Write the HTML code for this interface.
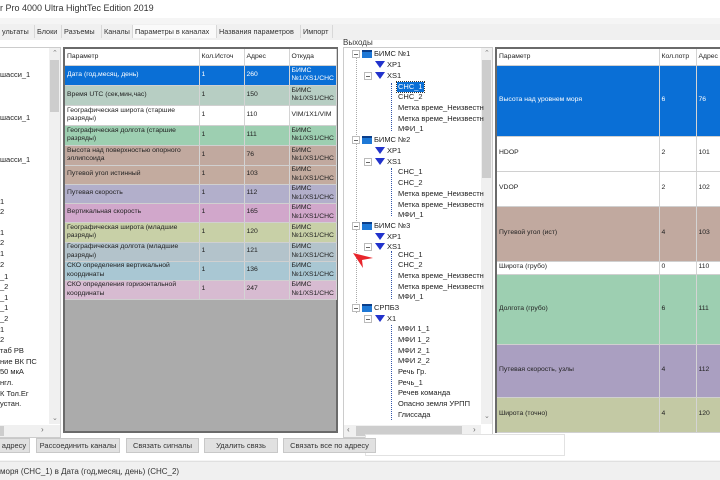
<!DOCTYPE html>
<html><head><meta charset="utf-8"><style>
*{margin:0;padding:0;box-sizing:border-box}
body{width:720px;height:480px;overflow:hidden;background:#f5f5f5;font-family:"Liberation Sans","DejaVu Sans",sans-serif;font-size:7.5px;color:#222;position:relative}
.a{position:absolute;white-space:nowrap}
.tab{position:absolute;top:25px;height:13px;line-height:13px;font-size:7.3px;padding-left:2px;border-right:1px solid #d8d8d8;color:#333;white-space:nowrap;overflow:hidden}
table{border-collapse:collapse;table-layout:fixed;position:absolute}
td{border-right:1px solid #d4d4d4;border-bottom:1px solid #d0d0d0;padding:0 2px;overflow:hidden;white-space:nowrap;font-size:6.8px;vertical-align:middle;line-height:8.5px}
td.w{white-space:normal}
.btn{position:absolute;top:438px;height:15px;background:#e1e1e1;border:1px solid #c8c8c8;font-size:7.5px;line-height:13px;text-align:center;color:#333;white-space:nowrap;overflow:hidden}
.t{position:absolute;font-size:7.5px;white-space:nowrap;line-height:10px}
.bx{position:absolute;width:8px;height:8px;border:1px solid #bbb;background:#fff}
.bx:after{content:"";position:absolute;left:1px;top:3px;width:4px;height:1px;background:#666}
.pc{position:absolute;width:10px;height:8px;background:#1e78d6;border-top:2px solid #0a3e8a}
.cn{position:absolute;width:0;height:0;border-left:5px solid transparent;border-right:5px solid transparent;border-top:7px solid #2233cc}
.wv{position:absolute;width:4px;height:9px;border-left:1px dotted #3355aa}
</style></head><body>
<div class="a" style="left:0;top:0;width:720px;height:18px;background:#fff"></div>
<div class="a" style="left:0;top:3px;font-size:9px;color:#333">r Pro 4000 Ultra HightTec Edition 2019</div>
<div class="a" style="left:0;top:24px;width:720px;height:16px;background:#f0f0f0"></div>
<div class="tab" style="left:0;width:35px">ультаты</div>
<div class="tab" style="left:35px;width:27px">Блоки</div>
<div class="tab" style="left:62px;width:40px">Разъемы</div>
<div class="tab" style="left:102px;width:31px">Каналы</div>
<div class="tab" style="left:133px;width:84px;background:#fafafa">Параметры в каналах</div>
<div class="tab" style="left:217px;width:84px">Названия параметров</div>
<div class="tab" style="left:301px;width:32px">Импорт</div>
<div class="a" style="left:0;top:40px;width:720px;height:420px;background:#fff"></div>

<!-- left list -->
<div class="a" style="left:0;top:47px;width:61px;height:391px;background:#fff;border:1px solid #ccc;border-left:0"></div>
<div class="a" style="left:49px;top:48px;width:11px;height:376px;background:#f0f0f0"></div>
<div class="a" style="left:50px;top:60px;width:9px;height:52px;background:#cdcdcd"></div>
<div class="a" style="left:52px;top:49px;font-size:7px;color:#777">⌃</div>
<div class="a" style="left:52px;top:414px;font-size:7px;color:#777">⌄</div>
<div class="a" style="left:0;top:425px;width:60px;height:12px;background:#f0f0f0"></div>
<div class="a" style="left:0;top:426px;width:4px;height:10px;background:#cdcdcd"></div>
<div class="a" style="left:41px;top:425px;font-size:8px;color:#666">›</div>
<div class="t" style="left:0;top:70px">шасси_1</div>
<div class="t" style="left:0;top:113px">шасси_1</div>
<div class="t" style="left:0;top:155px">шасси_1</div>
<div class="t" style="left:0;top:197px">1</div><div class="t" style="left:0;top:207px">2</div>
<div class="t" style="left:0;top:228px">1</div><div class="t" style="left:0;top:238px">2</div>
<div class="t" style="left:0;top:249px">1</div><div class="t" style="left:0;top:260px">2</div>
<div class="t" style="left:0;top:272px">_1</div><div class="t" style="left:0;top:282px">_2</div>
<div class="t" style="left:0;top:293px">_1</div><div class="t" style="left:0;top:303px">_1</div>
<div class="t" style="left:0;top:314px">_2</div><div class="t" style="left:0;top:325px">1</div>
<div class="t" style="left:0;top:335px">2</div><div class="t" style="left:0;top:346px">таб РВ</div>
<div class="t" style="left:0;top:357px">ние ВК ПС</div><div class="t" style="left:0;top:367px">50 мкА</div>
<div class="t" style="left:0;top:378px">нгл.</div><div class="t" style="left:0;top:389px">К Тол.Ег</div>
<div class="t" style="left:0;top:399px">устан.</div>

<!-- middle grid -->
<div class="a" style="left:63px;top:47px;width:275px;height:386px;background:#ababab;border:2px solid #6a6a6a"></div>
<table style="left:65px;top:49px;width:271px">
<colgroup><col style="width:134px"><col style="width:45px"><col style="width:45px"><col style="width:47px"></colgroup>
<tr style="height:16px;background:#fff"><td>Параметр</td><td>Кол.Источ</td><td>Адрес</td><td>Откуда</td></tr>
<tr style="height:20px;background:#0a6fd6;color:#fff"><td>Дата (год,месяц, день)</td><td>1</td><td>260</td><td>БИМС<br>№1/XS1/СНС</td></tr>
<tr style="height:20px;background:#b7cec3"><td>Время UTC (сек,мин,час)</td><td>1</td><td>150</td><td>БИМС<br>№1/XS1/СНС</td></tr>
<tr style="height:20px;background:#fff"><td>Географическая широта (старшие<br>разряды)</td><td>1</td><td>110</td><td>VIM/1X1/VIM</td></tr>
<tr style="height:20px;background:#9dcfb1"><td>Географическая долгота (старшие<br>разряды)</td><td>1</td><td>111</td><td>БИМС<br>№1/XS1/СНС</td></tr>
<tr style="height:20px;background:#c1a99f"><td>Высота над поверхностью опорного<br>эллипсоида</td><td>1</td><td>76</td><td>БИМС<br>№1/XS1/СНС</td></tr>
<tr style="height:19px;background:#c3ab9f"><td>Путевой угол истинный</td><td>1</td><td>103</td><td>БИМС<br>№1/XS1/СНС</td></tr>
<tr style="height:19px;background:#b2afcb"><td>Путевая скорость</td><td>1</td><td>112</td><td>БИМС<br>№1/XS1/СНС</td></tr>
<tr style="height:19px;background:#d1a7cb"><td>Вертикальная скорость</td><td>1</td><td>165</td><td>БИМС<br>№1/XS1/СНС</td></tr>
<tr style="height:20px;background:#c8d0a7"><td>Географическая широта (младшие<br>разряды)</td><td>1</td><td>120</td><td>БИМС<br>№1/XS1/СНС</td></tr>
<tr style="height:19px;background:#b3c3cb"><td>Географическая долгота (младшие<br>разряды)</td><td>1</td><td>121</td><td>БИМС<br>№1/XS1/СНС</td></tr>
<tr style="height:19px;background:#a9c7d3"><td>СКО определения вертикальной<br>координаты</td><td>1</td><td>136</td><td>БИМС<br>№1/XS1/СНС</td></tr>
<tr style="height:19px;background:#d7bbd1"><td>СКО определения горизонтальной<br>координаты</td><td>1</td><td>247</td><td>БИМС<br>№1/XS1/СНС</td></tr>
</table>

<!-- tree -->
<div class="a" style="left:343px;top:38px;font-size:8px;color:#333">Выходы</div>
<div class="a" style="left:343px;top:47px;width:150px;height:391px;background:#fff;border:1px solid #ccc"></div>
<div class="a" style="left:481px;top:48px;width:11px;height:376px;background:#f0f0f0"></div>
<div class="a" style="left:482px;top:60px;width:9px;height:118px;background:#cdcdcd"></div>
<div class="a" style="left:484px;top:49px;font-size:7px;color:#777">⌃</div>
<div class="a" style="left:484px;top:412px;font-size:7px;color:#777">⌄</div>
<div class="a" style="left:344px;top:425px;width:137px;height:12px;background:#f0f0f0"></div>
<div class="a" style="left:356px;top:426px;width:106px;height:10px;background:#cdcdcd"></div>
<div class="a" style="left:347px;top:425px;font-size:8px;color:#666">‹</div>
<div class="a" style="left:473px;top:425px;font-size:8px;color:#666">›</div>
<div class="a" style="left:356px;top:58px;height:255px;border-left:1px dotted #aaa"></div>

<div class="bx" style="left:352px;top:50px"></div><div class="pc" style="left:362px;top:50px"></div><div class="t" style="left:374px;top:49px">БИМС №1</div>
<div class="cn" style="left:375px;top:61px"></div><div class="t" style="left:387px;top:60px">XP1</div>
<div class="bx" style="left:364px;top:72px"></div><div class="cn" style="left:375px;top:72px"></div><div class="t" style="left:387px;top:71px">XS1</div>
<div class="wv" style="left:391px;top:83px;height:48px"></div>
<div class="t" style="left:397px;top:82px;background:#0a6fd6;color:#fff;padding:0 1px;outline:1px dotted #333">СНС_1</div>
<div class="t" style="left:398px;top:92px">СНС_2</div>
<div class="t" style="left:398px;top:103px">Метка време_Неизвестн</div>
<div class="t" style="left:398px;top:114px">Метка време_Неизвестн</div>
<div class="t" style="left:398px;top:124px">МФИ_1</div>
<div class="bx" style="left:352px;top:136px"></div><div class="pc" style="left:362px;top:136px"></div><div class="t" style="left:374px;top:135px">БИМС №2</div>
<div class="cn" style="left:375px;top:147px"></div><div class="t" style="left:387px;top:146px">XP1</div>
<div class="bx" style="left:364px;top:158px"></div><div class="cn" style="left:375px;top:158px"></div><div class="t" style="left:387px;top:157px">XS1</div>
<div class="wv" style="left:391px;top:168px;height:48px"></div>
<div class="t" style="left:398px;top:167px">СНС_1</div>
<div class="t" style="left:398px;top:178px">СНС_2</div>
<div class="t" style="left:398px;top:189px">Метка време_Неизвестн</div>
<div class="t" style="left:398px;top:200px">Метка време_Неизвестн</div>
<div class="t" style="left:398px;top:210px">МФИ_1</div>
<div class="bx" style="left:352px;top:222px"></div><div class="pc" style="left:362px;top:222px"></div><div class="t" style="left:374px;top:221px">БИМС №3</div>
<div class="cn" style="left:375px;top:233px"></div><div class="t" style="left:387px;top:232px">XP1</div>
<div class="bx" style="left:364px;top:243px"></div><div class="cn" style="left:375px;top:243px"></div><div class="t" style="left:387px;top:242px">XS1</div>
<div class="wv" style="left:391px;top:251px;height:48px"></div>
<div class="t" style="left:398px;top:250px">СНС_1</div>
<div class="t" style="left:398px;top:260px">СНС_2</div>
<div class="t" style="left:398px;top:271px">Метка време_Неизвестн</div>
<div class="t" style="left:398px;top:282px">Метка време_Неизвестн</div>
<div class="t" style="left:398px;top:292px">МФИ_1</div>
<svg class="a" style="left:353px;top:251px" width="22" height="18"><polygon points="0,2 20,7 9,9 10,17" fill="#e8252b"/></svg>
<div class="bx" style="left:352px;top:304px"></div><div class="pc" style="left:362px;top:304px"></div><div class="t" style="left:374px;top:303px">СРПБЗ</div>
<div class="bx" style="left:364px;top:315px"></div><div class="cn" style="left:375px;top:315px"></div><div class="t" style="left:387px;top:314px">X1</div>
<div class="wv" style="left:391px;top:325px;height:95px"></div>
<div class="t" style="left:398px;top:324px">МФИ 1_1</div>
<div class="t" style="left:398px;top:335px">МФИ 1_2</div>
<div class="t" style="left:398px;top:346px">МФИ 2_1</div>
<div class="t" style="left:398px;top:356px">МФИ 2_2</div>
<div class="t" style="left:398px;top:367px">Речь Гр.</div>
<div class="t" style="left:398px;top:378px">Речь_1</div>
<div class="t" style="left:398px;top:388px">Речев команда</div>
<div class="t" style="left:398px;top:399px">Опасно земля УРПП</div>
<div class="t" style="left:398px;top:410px">Глиссада</div>

<!-- right grid -->
<div class="a" style="left:495px;top:47px;width:230px;height:386px;background:#ababab;border:2px solid #6a6a6a"></div>
<table style="left:497px;top:49px;width:226px">
<colgroup><col style="width:162px"><col style="width:37px"><col style="width:27px"></colgroup>
<tr style="height:16px;background:#fff"><td>Параметр</td><td>Кол.потр</td><td>Адрес</td></tr>
<tr style="height:71px;background:#0a6fd6;color:#fff"><td>Высота над уровнем моря</td><td>6</td><td>76</td></tr>
<tr style="height:35px;background:#fff"><td>HDOP</td><td>2</td><td>101</td></tr>
<tr style="height:35px;background:#fff"><td>VDOP</td><td>2</td><td>102</td></tr>
<tr style="height:55px;background:#c1a99f"><td>Путевой угол (ист)</td><td>4</td><td>103</td></tr>
<tr style="height:13px;background:#fff"><td>Широта (грубо)</td><td>0</td><td>110</td></tr>
<tr style="height:70px;background:#9dcfb1"><td>Долгота (грубо)</td><td>6</td><td>111</td></tr>
<tr style="height:53px;background:#aa9fc1"><td>Путевая скорость, узлы</td><td>4</td><td>112</td></tr>
<tr style="height:35px;background:#c3c9a4"><td>Широта (точно)</td><td>4</td><td>120</td></tr>
</table>

<div class="a" style="left:365px;top:434px;width:200px;height:22px;background:#fff;border:1px solid #e2e2e2"></div>
<div class="btn" style="left:-2px;width:32px">адресу</div>
<div class="btn" style="left:36px;width:84px">Рассоединить каналы</div>
<div class="btn" style="left:126px;width:73px">Связать сигналы</div>
<div class="btn" style="left:204px;width:74px">Удалить связь</div>
<div class="btn" style="left:283px;width:93px">Связать все по адресу</div>

<div class="a" style="left:0;top:461px;width:720px;height:19px;background:#f0f0f0;border-top:1px solid #e0e0e0"></div>
<div class="a" style="left:0;top:467px;font-size:8px;color:#333">моря (СНС_1) в Дата (год,месяц, день) (СНС_2)</div>
</body></html>
